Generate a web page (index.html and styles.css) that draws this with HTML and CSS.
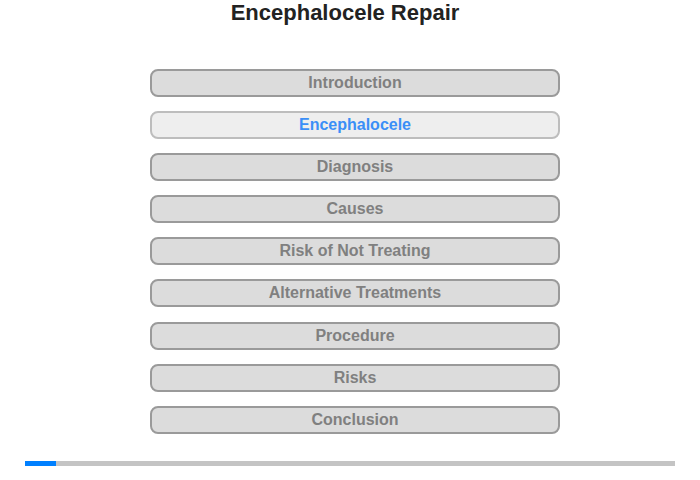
FILE: index.html
```html
<!DOCTYPE html>
<html>
<head>
<meta charset="utf-8">
<link rel="stylesheet" href="styles.css">
</head>
<body>
<div class="page">
  <h1 class="title">Encephalocele Repair</h1>
  <nav class="menu">
    <div class="item">Introduction</div>
    <div class="item active">Encephalocele</div>
    <div class="item">Diagnosis</div>
    <div class="item">Causes</div>
    <div class="item">Risk of Not Treating</div>
    <div class="item">Alternative Treatments</div>
    <div class="item">Procedure</div>
    <div class="item">Risks</div>
    <div class="item">Conclusion</div>
  </nav>
  <div class="progress"><div class="progress-fill" style="width:31px"></div></div>
</div>
</body>
</html>
```
FILE: styles.css
```css
html, body {
  margin: 0;
  padding: 0;
  background: #fff;
}
.page {
  width: 700px;
  height: 480px;
  font-family: "Liberation Sans", Arial, sans-serif;
}
.title {
  margin: 0;
  width: 690px;
  text-align: center;
  font-size: 22px;
  line-height: 26px;
  font-weight: bold;
  color: #222;
}
.menu {
  display: flex;
  flex-direction: column;
  gap: 14.1px;
  width: 410px;
  margin: 43px 0 0 150px;
}
.item {
  box-sizing: border-box;
  height: 28px;
  border: 2px solid #9a9a9a;
  border-radius: 8px;
  background: #dcdcdc;
  color: #808080;
  font-size: 16px;
  font-weight: bold;
  line-height: 24px;
  text-align: center;
}
.item.active {
  background: #eeeeee;
  border-color: #bdbdbd;
  color: #3b8ff7;
}
.progress {
  margin: 27px 0 0 25px;
  width: 650px;
  height: 5px;
  background: #c4c4c4;
}
.progress-fill {
  height: 5px;
  background: #0080ff;
}
```
